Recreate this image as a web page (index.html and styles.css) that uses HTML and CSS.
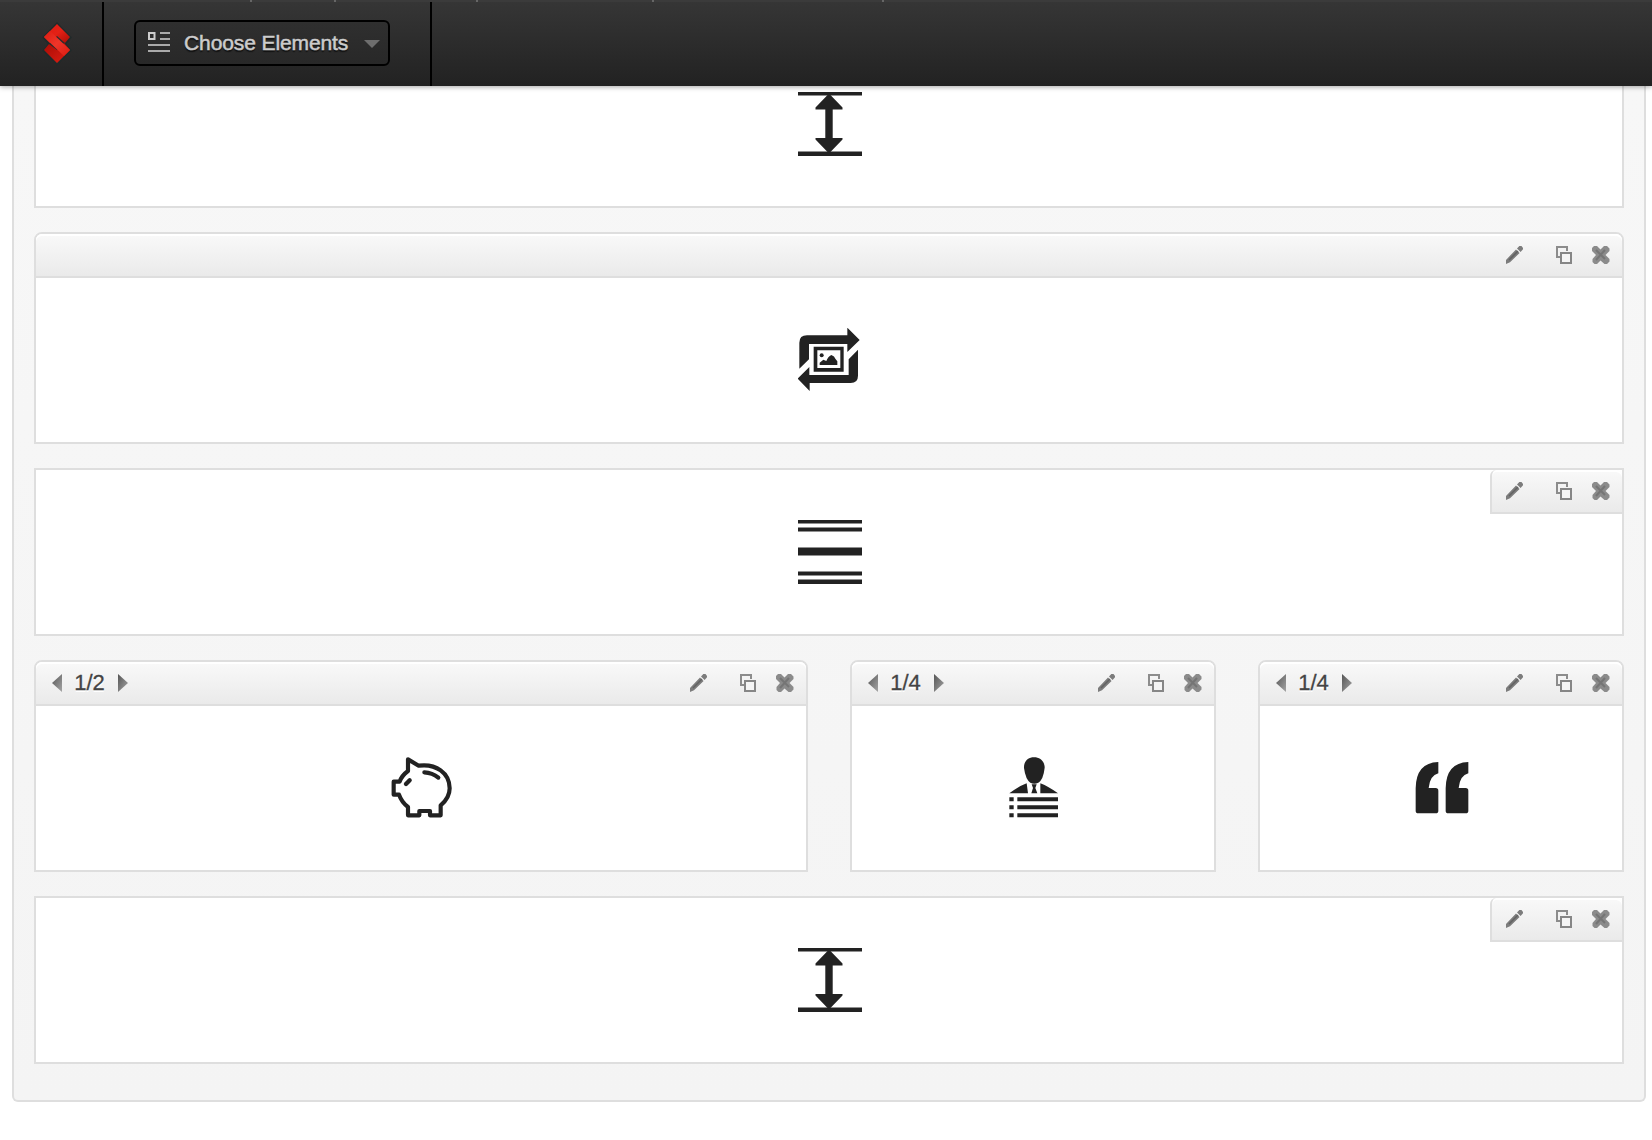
FILE: index.html
```html
<!DOCTYPE html>
<html lang="en">
<head>
<meta charset="utf-8">
<title>Layout Builder</title>
<link rel="stylesheet" href="styles.css">
</head>
<body>
<svg class="defs" aria-hidden="true">
  <defs>
    <linearGradient id="grey" x1="0" y1="0" x2="1" y2="1"><stop offset="0" stop-color="#555"/><stop offset="1" stop-color="#a5a5a5"/></linearGradient>
    <linearGradient id="red-top" x1="0" y1="0" x2="1" y2="1"><stop offset="0" stop-color="#e01b10"/><stop offset=".5" stop-color="#e32116"/><stop offset="1" stop-color="#a80d05"/></linearGradient>
    <linearGradient id="red-bottom" x1="0" y1="0" x2="1" y2="1"><stop offset="0" stop-color="#a90c05"/><stop offset="1" stop-color="#e01f14"/></linearGradient>
    <linearGradient id="red-band" x1="0" y1="0" x2="1" y2="1"><stop offset="0" stop-color="#dc1c11"/><stop offset=".5" stop-color="#ee3529"/><stop offset="1" stop-color="#dc1c11"/></linearGradient>
  </defs>
  <symbol id="pencil" viewBox="0 0 18 18"><path d="M0 18V14L10 3.400L13.600 7L4 16.300Z M11 2.400L13.300 0H15.500L17 2V3.300L14.600 6Z" fill="#7c7c7c"/><path d="M3 14L12 5" stroke="#626262" stroke-width="1.500"/></symbol>
  <symbol id="copy" viewBox="0 0 18 18"><path d="M4 11H1V1H11V5" fill="none" stroke="#8c8c8c" stroke-width="2"/><rect x="5" y="7" width="10" height="10" fill="#f5f5f5" stroke="#868686" stroke-width="2"/></symbol>
  <symbol id="close" viewBox="0 0 18 18"><path d="M2 0H5L8.500 3.500L12 0H15L17.500 2.500V5L13.500 9L17.500 13V15.500L15 18H12.500L8.500 14.500L5 18H2.500L.5 16V13L4 9L0 5V2Z" fill="#8b8b8b"/><path d="M4 4L13 13M13 4L4 14" stroke="#757575" stroke-width="2"/></symbol>
  <symbol id="prev" viewBox="0 0 10 18"><path d="M10 0V18L0 9Z" fill="url(#grey)"/></symbol>
  <symbol id="next" viewBox="0 0 10 18"><path d="M0 0V18L10 9Z" fill="url(#grey)"/></symbol>
  <symbol id="spacer" viewBox="0 0 64 64"><path d="M0 0H64V3.500H0ZM0 59.500H64V64H0Z"/><path d="M31 1.500L44.500 15.500V17.500H34.700V46H44.500V47.500L31 61.500L17.500 47.500V46H27.300V17.500H17.500V15.500Z"/></symbol>
  <symbol id="divider" viewBox="0 0 64 64"><path d="M0 0H64V3.500H0ZM0 7.500H64V11.500H0ZM0 27.500H64V35.500H0ZM0 51.500H64V55.500H0ZM0 59.500H64V64H0Z"/></symbol>
  <symbol id="slider" viewBox="0 0 64 64"><g transform="translate(-18 -18) scale(.33333)"><path d="M58 176V98Q58 76 81 76H202V53L239 90L202 126V102H87V148ZM234 119V197Q234 219 212 219H89V243L53 206L88 171V195H206V148Z"/><path d="M101 110H191V185H101ZM112 121V174H181V121Z" fill-rule="evenodd"/><circle cx="125" cy="136" r="6"/><path d="M119 165V158L130 149L139 153Q144 139 154 135Q164 139 166 146L172 154V165Z"/></g></symbol>
  <symbol id="pig" viewBox="0 0 64 64"><g transform="translate(-20 -16) scale(.33333)" fill="none" stroke="#222" stroke-width="12.500" stroke-linejoin="round" stroke-linecap="round"><path d="M114 58L146 77C198 70 239 99 239 145Q239 174 212 196V226H180V213H148V226H114V201Q95 187 87 164H71V125H89Q95 107 114 93Z"/><path d="M163 97Q187 98 205 113"/><path d="M108 132L119 121" stroke-width="13"/></g></symbol>
  <symbol id="person" viewBox="0 0 64 64"><g transform="translate(-12 -16) scale(.33333)"><path d="M132 52C151 52 164 65 164 83Q160 119 145 128Q133 134 121 128Q107 119 102 84C101 65 113 52 132 52Z"/><path d="M58 160Q84 140 110 130L114 160ZM151 130Q176 140 204 160H151ZM125 133H140L136 144L142 160H124L129 144Z"/><path d="M58 172H71V184H58ZM82 172H204V184H82ZM58 196H71V208H58ZM82 196H204V208H82ZM58 220H71V232H58ZM82 220H204V232H82Z"/></g></symbol>
  <symbol id="quote" viewBox="0 0 64 64"><g transform="translate(-20 -16) scale(.33333)"><path id="quote-mark" d="M145 66V100Q120 106 116 144H137Q145 144 145 152V212Q145 220 137 220H85Q77 220 77 212V145Q78 68 145 66Z"/><use href="#quote-mark" x="90"/></g></symbol>
</svg>

<header class="topbar">
  <div class="ticks"><i class="tick t1"></i><i class="tick t2"></i><i class="tick t3"></i><i class="tick t4"></i><i class="tick t5"></i></div>
  <div class="logo">
    <svg width="30" height="44" viewBox="0 0 30 44">
      <path d="M15 1.500L28.500 15.500L23 22L28.500 28.500L15 42L1.500 29L7 22L1.500 15.500Z" fill="none" stroke="#202a2a" stroke-width="2"/>
      <path d="M15 2L28 15L23 21L15 14L8 21L2 15Z" fill="url(#red-top)"/>
      <path d="M15 41L2 28L7 22L15 28L22 21L28 28Z" fill="url(#red-bottom)"/>
      <path d="M2 15L8 9L28 28L22 34Z" fill="url(#red-band)"/>
    </svg>
  </div>
  <div class="tools">
    <button class="choose" type="button">
      <svg width="22" height="22" viewBox="0 0 22 22"><path d="M1 1H6.500V7H1Z" fill="none" stroke="#ccc" stroke-width="2"/><path d="M12 1H22M12 7H22M0 13H22M0 19H22" stroke="#aaa" stroke-width="2"/></svg>
      <span>Choose Elements</span>
      <svg class="caret" width="16" height="8" viewBox="0 0 16 8"><path d="M0 0H16L8 8Z" fill="#6e6e6e"/></svg>
    </button>
  </div>
</header>

<main class="canvas">
  <section class="block cut"><div class="body"><svg><use href="#spacer"/></svg></div></section>

  <section class="block">
    <div class="bar"><div class="actions"><svg class="edit"><use href="#pencil"/></svg><svg><use href="#copy"/></svg><svg><use href="#close"/></svg></div></div>
    <div class="body"><svg><use href="#slider"/></svg></div>
  </section>

  <section class="block">
    <div class="bar mini"><div class="actions"><svg class="edit"><use href="#pencil"/></svg><svg><use href="#copy"/></svg><svg><use href="#close"/></svg></div></div>
    <div class="body"><svg><use href="#divider"/></svg></div>
  </section>

  <div class="columns">
    <section class="block">
      <div class="bar"><div class="size"><svg><use href="#prev"/></svg><span>1/2</span><svg><use href="#next"/></svg></div><div class="actions"><svg class="edit"><use href="#pencil"/></svg><svg><use href="#copy"/></svg><svg><use href="#close"/></svg></div></div>
      <div class="body"><svg><use href="#pig"/></svg></div>
    </section>
    <section class="block">
      <div class="bar"><div class="size"><svg><use href="#prev"/></svg><span>1/4</span><svg><use href="#next"/></svg></div><div class="actions"><svg class="edit"><use href="#pencil"/></svg><svg><use href="#copy"/></svg><svg><use href="#close"/></svg></div></div>
      <div class="body"><svg><use href="#person"/></svg></div>
    </section>
    <section class="block">
      <div class="bar"><div class="size"><svg><use href="#prev"/></svg><span>1/4</span><svg><use href="#next"/></svg></div><div class="actions"><svg class="edit"><use href="#pencil"/></svg><svg><use href="#copy"/></svg><svg><use href="#close"/></svg></div></div>
      <div class="body"><svg><use href="#quote"/></svg></div>
    </section>
  </div>

  <section class="block">
    <div class="bar mini"><div class="actions"><svg class="edit"><use href="#pencil"/></svg><svg><use href="#copy"/></svg><svg><use href="#close"/></svg></div></div>
    <div class="body"><svg><use href="#spacer"/></svg></div>
  </section>
</main>
</body>
</html>
```
FILE: styles.css
```css
* { box-sizing: border-box; }
body {
  margin: 0;
  height: 1140px;
  overflow: hidden;
  background: #fff;
  font-family: "Liberation Sans", Arial, sans-serif;
}
svg { display: block; flex: none; }
.defs { position: absolute; width: 0; height: 0; }

.topbar {
  position: relative;
  z-index: 2;
  display: flex;
  height: 86px;
  padding-top: 2px;
  background: linear-gradient(#363636, #222);
  box-shadow: 0 1px 5px rgba(0, 0, 0, .35);
}
.ticks { position: absolute; inset: 0 0 auto; height: 2px; background: #3b3b3b; }
.tick { position: absolute; top: 0; width: 2px; height: 2px; background: #666; }
.t1 { left: 250px; }
.t2 { left: 334px; }
.t3 { left: 476px; }
.t4 { left: 652px; }
.t5 { left: 882px; }
.logo {
  width: 104px;
  padding: 20px 0 0 42px;
  border-right: 2px solid #000;
}
.tools {
  width: 328px;
  padding: 18px 0 0 30px;
  border-right: 2px solid #000;
}
.choose {
  display: flex;
  align-items: center;
  width: 256px;
  height: 46px;
  margin: 0;
  padding: 0 8px 0 12px;
  border: 2px solid #000;
  border-radius: 6px;
  background: linear-gradient(#2f2f2f, #282828);
  color: #ccc;
  font: 21px/24px "Liberation Sans", Arial, sans-serif;
  letter-spacing: -.1px;
  -webkit-text-stroke: .5px #ccc;
  text-shadow: 0 2px 1px #111;
  white-space: nowrap;
}
.choose span { margin-left: 14px; }
.choose .caret { margin: 2px 0 0 auto; }

.canvas {
  display: flex;
  flex-direction: column;
  gap: 24px;
  width: 1634px;
  height: 1016px;
  margin-left: 12px;
  padding: 0 20px;
  border: 2px solid #dedede;
  border-top: 0;
  border-radius: 0 0 6px 6px;
  background: linear-gradient(#f7f7f7, #f4f4f4);
}
.block {
  position: relative;
  flex: none;
  border: 2px solid #dedede;
  border-radius: 8px 8px 0 0;
  background: #fff;
}
.block:has(.mini), .block.cut { border-radius: 0; }
.cut { height: 122px; border-top: 0; }
.cut .body { height: 120px; padding-top: 6px; }
.columns { display: grid; grid-template-columns: 774px 366px 366px; gap: 42px; }

.bar {
  display: flex;
  height: 44px;
  padding: 12px 12px 0 16px;
  border-bottom: 2px solid #dedede;
  border-radius: 6px 6px 0 0;
  background: linear-gradient(#f9f9f9, #eaeaea);
  box-shadow: inset 0 2px #fff;
}
.mini {
  position: absolute;
  top: 0;
  right: 0;
  width: 132px;
  padding-left: 12px;
  border-left: 2px solid #dedede;
}
.size { display: flex; height: 18px; align-items: center; }
.size svg { width: 10px; height: 18px; }
.size span {
  width: 56px;
  padding-right: 1px;
  color: #444;
  font-size: 22px;
  line-height: 18px;
  text-align: center;
  -webkit-text-stroke: .3px #444;
  text-shadow: 0 2px #fff;
}
.actions { display: flex; margin-left: auto; }
.actions svg { width: 18px; height: 18px; margin-left: 18px; }
.actions .edit { margin: 0 14px 0 0; }

.body {
  display: flex;
  justify-content: center;
  height: 164px;
  padding: 50px 0 0 2px;
}
.body svg { width: 64px; height: 64px; fill: #222; }
```
